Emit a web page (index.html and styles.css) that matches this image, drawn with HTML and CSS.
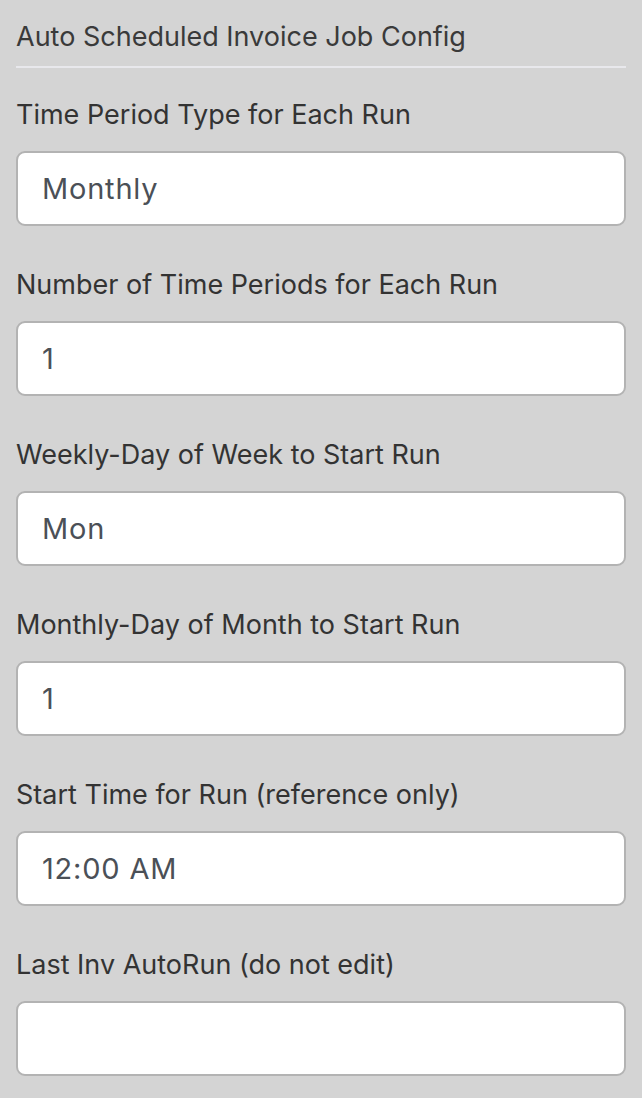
FILE: index.html
```html
<!DOCTYPE html>
<html>
<head>
<meta charset="utf-8">
<link rel="stylesheet" href="styles.css">
</head>
<body>
<div class="page">
  <div class="header">Auto Scheduled Invoice Job Config</div>
  <div class="divider"></div>
  <div class="field">
    <div class="label">Time Period Type for Each Run</div>
    <div class="input">Monthly</div>
  </div>
  <div class="field">
    <div class="label">Number of Time Periods for Each Run</div>
    <div class="input">1</div>
  </div>
  <div class="field">
    <div class="label">Weekly-Day of Week to Start Run</div>
    <div class="input">Mon</div>
  </div>
  <div class="field">
    <div class="label">Monthly-Day of Month to Start Run</div>
    <div class="input">1</div>
  </div>
  <div class="field">
    <div class="label">Start Time for Run (reference only)</div>
    <div class="input">12:00 AM</div>
  </div>
  <div class="field">
    <div class="label">Last Inv AutoRun (do not edit)</div>
    <div class="input"></div>
  </div>
</div>
</body>
</html>
```
FILE: styles.css
```css
html, body {
  margin: 0;
  padding: 0;
  background: #d4d4d4;
}
.page {
  padding: 19px 16px 0 16px;
  font-family: Inter, "Noto Sans", sans-serif;
}
.header {
  font-size: 27px;
  line-height: 36px;
  color: #3a3a3a;
}
.divider {
  height: 2px;
  background: #e8e8ec;
  margin-top: 11px;
  margin-bottom: 29px;
}
.field {
  margin-bottom: 41px;
}
.label {
  font-size: 27px;
  line-height: 36px;
  color: #333333;
}
.input {
  margin-top: 18px;
  box-sizing: border-box;
  height: 75px;
  background: #ffffff;
  border: 2px solid #b3b3b3;
  border-radius: 9px;
  padding-left: 24px;
  display: flex;
  align-items: center;
  font-size: 29px;
  letter-spacing: 0.8px;
  color: #4b5057;
}
```
